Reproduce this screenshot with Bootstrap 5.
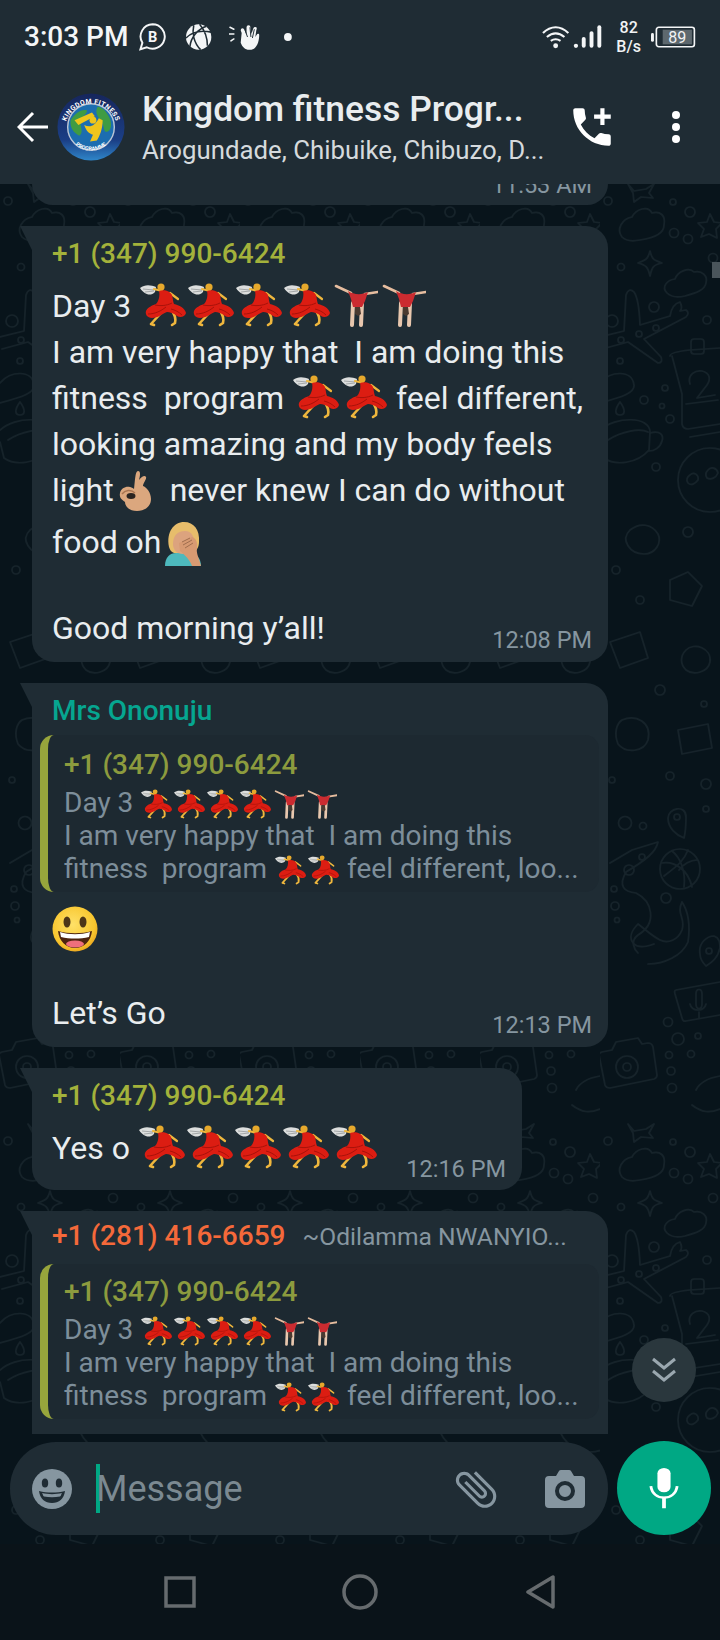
<!DOCTYPE html>
<html lang="en">
<head>
    <meta charset="UTF-8">
    <meta name="viewport" content="width=device-width, initial-scale=1.0">
    <title>Kingdom fitness Programme</title>
    <link href="https://cdn.jsdelivr.net/npm/bootstrap@5.3.0/dist/css/bootstrap.min.css" rel="stylesheet">
    <style>
        body { margin: 0; background: #08141b; font-family: Roboto, "Liberation Sans", sans-serif; color: #e9edef; }
        .app { width: 720px; height: 1640px; overflow: hidden; }
        .wallpaper { position: absolute; left: 0; top: 0; z-index: 0; }
        .wa-head { height: 184px; background: #1f2c34; z-index: 2; }
        .statusbar { height: 74px; padding: 0 24px; }
        .clock { font-size: 28px; font-weight: 500; color: #f4f6f7; width: 117px; white-space: nowrap; }
        .speed { width: 38px; font-size: 16px; line-height: 19px; font-weight: 500; text-align: center; color: #f1f3f4; }
        .toolbar { height: 110px; margin-top: -2px; padding-left: 17px; }
        .avatar { margin-left: 8px; }
        .chat-title { font-size: 35.4px; font-weight: 500; line-height: 42px; color: #e9edef; white-space: nowrap; margin-top: 1px; }
        .chat-sub { font-size: 25.8px; line-height: 34px; color: #d5dadd; white-space: nowrap; margin-top: 3px; }
        .head-text { margin-left: 17px; width: 416px; }
        .chat-area { height: 1250px; overflow: hidden; z-index: 1; }
        .bub { background: #1f2c34; width: 576px; margin: 21px 0 0 32px; padding: 10px 16px 11px 20px; border-radius: 22px; position: relative; }
        .bub.has-tail { border-top-left-radius: 0; }
        .bub.has-tail::before { content: ""; position: absolute; left: -12px; top: 0; width: 12px; height: 24px; background: #1f2c34; clip-path: polygon(0 0, 100% 0, 100% 100%); }
        .bub-stub { display: flow-root; height: 21px; margin-top: 0; border-radius: 0 0 22px 22px; padding: 0 16px; text-align: right; }
        .bub-stub .msg-time { display: block; margin-top: -14px; }
        .bub-short { width: 490px; padding-bottom: 19px; }
        .bub-cut { padding-top: 7px; padding-bottom: 40px; }
        .who { font-size: 28px; font-weight: 500; line-height: 36px; white-space: nowrap; }
        .who-olive { color: #a3b23b; }
        .who-teal { color: #06a690; }
        .who-orange { color: #f4693a; }
        .who-alias { font-size: 24.6px; font-weight: 400; color: #8696a0; margin-left: 17px; }
        .ln { height: 46px; line-height: 46px; font-size: 32px; white-space: pre; color: #e9edef; }
        .first-ln { margin-top: 11px; }
        .food-ln { margin-top: 6px; }
        .morning-ln { margin-top: 40px; }
        .lets-ln { margin-top: 38px; }
        .msg-time { font-size: 23.5px; line-height: 30px; color: #8696a0; white-space: nowrap; }
        .end-ln .msg-time { margin-bottom: -4px; }
        .bub-short .end-ln .msg-time { margin-bottom: -13px; }
        .quote { background: #1d2931; margin: 6px -7px 0 -12px; border-left: 8px solid #97a53c; border-radius: 14px; padding: 12px 10px 7px 16px; }
        .bub-cut .quote { margin-top: 9px; padding-top: 10px; }
        .q-who { color: #8c9b3e; }
        .q-ln { height: 33px; line-height: 33px; font-size: 28px; color: #7d8e9a; white-space: pre; }
        .q-first { margin-top: 3px; }
        .emo { width: 46px; height: 44px; margin: 0 1px; vertical-align: -10px; }
        .emo-q { width: 31px; height: 30px; margin: 0 1px; vertical-align: -7px; }
        .emo-ok { width: 34px; height: 42px; margin: 0 17px 0 5px; vertical-align: -11px; }
        .emo-palm { width: 38px; height: 44px; margin-left: 3px; vertical-align: -13px; }
        .emo-smile { display: block; width: 46px; height: 46px; margin-top: 14px; }
        .to-bottom { position: absolute; left: 632px; top: 1338px; width: 64px; height: 64px; background: #2a373d; border-radius: 50%; z-index: 3; }
        .side-tick { position: absolute; left: 712px; top: 262px; width: 8px; height: 16px; background: #4a555b; z-index: 3; }
        .composer { height: 110px; padding: 8px 9px 0 10px; z-index: 2; gap: 9px; }
        .pill { width: 598px; height: 93px; background: #1f2c34; border-radius: 46px; padding-left: 22px; }
        .caret-bar { width: 4px; height: 49px; background: #00a884; margin-left: 24px; }
        .msg-hint { font-size: 36px; color: #7b8991; margin-left: -4px; width: 364px; }
        .mic-btn { width: 94px; height: 94px; background: #00a884; border-radius: 50%; margin-top: -1px; }
        .navkeys { height: 96px; background: #0a1319; z-index: 2; }
    </style>
</head>
<body>
<div class="app d-flex flex-column position-relative">

    <!-- doodle wallpaper, tile follows the right hand strip of the screen -->
    <svg class="wallpaper" width="720" height="1640" aria-hidden="true">
        <defs>
            <pattern id="doodles" patternUnits="userSpaceOnUse" x="0" y="180" width="120" height="940">
                <g fill="none" stroke="#16232a" stroke-width="1.7" stroke-linejoin="round" stroke-linecap="round">
                    <path d="M28 4l6 7 12-2 8-5-5 9 4 5-12-1-7 5-1-9z"/>
                    <circle cx="8" cy="21" r="4"/><circle cx="73" cy="22" r="3"/><circle cx="90" cy="32" r="5"/><circle cx="74" cy="53" r="4.500"/><circle cx="88" cy="59" r="4.500"/><circle cx="21" cy="87" r="3.500"/><circle cx="113" cy="78" r="4.500"/>
                    <path d="M22 57c-6-8 0-18 10-20 4-8 16-12 20-4 8-2 14 2 12 12 0 8-10 13-24 15-10 2-15 0-18-3z"/>
                    <path d="M50 71c2 8 3 9 12 12-9 2-10 4-12 13-2-9-4-11-12-13 8-3 10-4 12-12z"/>
                    <path d="M110 34l4 8 8 1-6 6 1 9-8-4-8 3 3-8-6-6 9-1z"/>
                    <path d="M67 113c-6-6 0-13 8-14 3-8 14-12 19-7 8-2 14 4 12 11-1 7-10 10-21 13-9 2-15 0-18-3z"/>
                    <path d="M0 157l24-6 2-36q3-8 8-3 5 7 6 33l30-9q2-12 10-14 3 6 0 9l6-1q4 3 0 7l-42 22 17 18q2 6-3 6l-30-21-26 7"/>
                    <circle cx="54" cy="127" r="5"/><circle cx="12" cy="141" r="6"/><circle cx="39" cy="154" r="3"/><circle cx="56" cy="148" r="3"/><circle cx="21" cy="160" r="3"/><circle cx="107" cy="140" r="4"/>
                    <path d="M70 176q0-4 20-6l30-2M72 176l10 38v30q1 5 6 5l32-5"/>
                    <rect x="91" y="159" width="13" height="15" rx="3"/>
                    <path d="M90 204c-3-10 6-14 12-13 8 2 9 8 5 14l-10 13 18-3M86 224l32-4"/>
                    <path d="M90 257l30-5"/>
                    <circle cx="65" cy="208" r="3"/><circle cx="44" cy="220" r="4"/><circle cx="62" cy="226" r="2.500"/><circle cx="70" cy="239" r="4"/><circle cx="20" cy="181" r="3"/>
                    <path d="M0 203c10-12 32-14 34 2 1 8-12 12-34 18"/>
                    <path d="M20 222c-6 8-5 13 0 13s6-5 0-13z"/>
                    <path d="M0 250c16-14 50-14 50 2l-1 18c-12 14-34 16-45 8L0 262"/>
                    <path d="M8 260c14-9 32-12 40-8M50 253c10-3 14 2 12 8-2 7-8 10-13 10"/>
                    <circle cx="56" cy="287" r="4"/>
                    <circle cx="110" cy="300" r="32"/>
                    <path d="M90 295c4-4 9 0 8 5-3 4-7 6-10 3-2-3-1-6 2-8zM108 290c3-4 9-2 10 3-2 5-7 7-11 5-2-3-1-6 1-8z"/>
                    <!-- middle of the strip -->
                    <path d="M30 350c10-8 22-6 28 4 4 8-2 20-14 20-14 0-24-14-14-24z"/><circle cx="88" cy="352" r="5"/><circle cx="16" cy="390" r="4"/>
                    <path d="M70 400l18-8 14 14-10 20-22-6z"/><circle cx="40" cy="420" r="4"/>
                    <path d="M10 462l30-10 8 26-28 10z"/><path d="M86 470c8-8 26-2 24 12-2 10-16 14-24 8-6-6-6-14 0-20z"/>
                    <circle cx="60" cy="510" r="5"/><circle cx="104" cy="524" r="3"/>
                    <path d="M22 540c14-6 30 2 26 20-4 12-22 14-30 4-4-10-2-20 4-24z"/><path d="M78 550l30-6 4 24-30 6z"/>
                    <circle cx="70" cy="596" r="4"/><circle cx="12" cy="600" r="3"/><circle cx="106" cy="604" r="5"/>
                    <!-- lower part, ball, tentacle, pins, camera -->
                    <circle cx="25" cy="643" r="6.500"/><circle cx="43" cy="646" r="3.500"/><circle cx="106" cy="629" r="3"/>
                    <path d="M68 638c0-10 18-14 18-1 0 8-1 17-2 21-8-3-16-10-16-20z"/><circle cx="77" cy="637" r="3"/>
                    <circle cx="80" cy="689" r="20"/><path d="M62 683c12-2 26 6 30 24M72 671c8 6 14 20 12 36M88 670c-4 10-8 14-24 26M97 680c-6 0-14 4-18 10"/>
                    <path d="M10 683l22-13 26-8c-2 10-12 18-32 30-8 14-2 20 10 21 16 8 22 30 2 42-8 6-4 14 0 18"/>
                    <circle cx="29" cy="690" r="5"/><circle cx="42" cy="677" r="3"/><circle cx="14" cy="709" r="3"/><circle cx="15" cy="726" r="4"/><circle cx="66" cy="718" r="5"/><circle cx="17" cy="740" r="2.500"/>
                    <path d="M82 722c-6 12 4 16 0 28-4 10-14 14-22 10-8-4-14-10-22-16-6 6-10 14-4 20 6 6 20 0 20 0M82 722c8 12 8 26 6 40-6 14-24 22-40 22"/>
                    <path d="M100 774c-2-12 8-18 14-18 6 2 6 8 6 12-2 10-8 14-14 18-4-4-6-8-6-12z"/><circle cx="109" cy="771" r="3"/>
                    <path d="M76 810l44-8M76 810q-2 0-1 4l7 24q1 4 4 3l34-6"/><path d="M96 814c0-6 6-6 6 0v10c0 6-6 6-6 0zM90 824c2 8 14 8 16 0M99 832v6"/>
                    <circle cx="68" cy="842" r="4.500"/><circle cx="78" cy="859" r="6"/><circle cx="98" cy="856" r="3"/><circle cx="69" cy="875" r="3.500"/><circle cx="91" cy="874" r="3.500"/><circle cx="71" cy="891" r="4"/><circle cx="72" cy="908" r="4.500"/>
                    <path d="M2 872l10-2 4-8 22-4 4 6 6-1q4 0 5 4l4 28q0 3-3 4l-44 9q-4 0-5-3l-6-30q0-2 3-3z"/><circle cx="27" cy="887" r="11"/><circle cx="27" cy="887" r="4"/>
                    <path d="M96 910c4-8 12-12 24-14M92 925c10 8 18 8 28 4"/>
                </g>
            </pattern>
        </defs>
        <rect width="720" height="1640" fill="url(#doodles)"/>
    </svg>

    <!-- emoji drawings -->
    <svg width="0" height="0" class="position-absolute" aria-hidden="true">
        <symbol id="dancer" viewBox="0 0 46 44">
            <path d="M0 5C5 1 11 2 16 4l-1 5C10 14 4 11 0 5z" fill="#dcdedd"/>
            <path d="M3 6l11 1M5 9l9-1" stroke="#8b8f90" stroke-width=".7" fill="none"/>
            <path d="M14 6l8 2M30 10l8 6" stroke="#efb73d" stroke-width="2.200" fill="none" stroke-linecap="round"/>
            <circle cx="21" cy="4" r="3.600" fill="#e6a92c"/>
            <path d="M21 30L11 41M11 41l3 1" stroke="#efb73d" stroke-width="2.600" fill="none" stroke-linecap="round"/>
            <path d="M32 28c3 4 4 8 3 12l-3 2" stroke="#efb73d" stroke-width="2.600" fill="none" stroke-linecap="round"/>
            <path d="M19 8C24 6 30 8 32 12c1 4 1 7 2 9 5 1 11 4 12 9-1 4-6 5-9 3-4-3-7-4-10-4-5 2-9 6-15 6-5 0-7-4-6-7 2-4 7-6 10-7 3-3 4-9 3-13z" fill="#dc1d12"/>
            <path d="M8 31c7 0 13-3 18-7M15 22c5 1 11 1 17-2M31 26c4 1 8 3 11 6" stroke="#a8120a" stroke-width="1" fill="none"/>
        </symbol>
        <symbol id="gymnast" viewBox="0 0 46 44">
            <path d="M4 3l15 7M46 9l-13 2" stroke="#e6bd9f" stroke-width="2.600" stroke-linecap="round"/>
            <path d="M21 20l-1 22M30 20l-1 22" stroke="#e8c7ae" stroke-width="4" stroke-linecap="round"/>
            <path d="M16 8c6 4 14 4 20 1l-3 9-3 6h-9l-2-8z" fill="#cb2b30"/>
            <path d="M23 24h5l1 7-3 2-3-2z" fill="#4a3a30"/>
        </symbol>
        <symbol id="okhand" viewBox="0 0 34 42">
            <path d="M19 1c3 0 2 5 1 9 3-4 6-5 7-3 1 2-3 6-3 9 3 1 8 6 8 13 0 8-7 12-14 12-8 0-12-5-12-9C3 30 0 28 1 23c1-5 6-7 10-6 1 0 3 1 4 2 1-7 1-18 4-18z" fill="#dba77e"/>
            <ellipse cx="12" cy="26" rx="4.500" ry="3" fill="#2b2420"/>
            <path d="M3 24c3-4 9-5 13-1" stroke="#a97551" stroke-width="1.500" fill="none"/>
        </symbol>
        <symbol id="facepalm" viewBox="0 0 38 44">
            <path d="M1 44c0-9 5-13 11-13h12c8 0 13 5 13 13z" fill="#4db9bd"/>
            <path d="M5 25C2 10 10 0 20 0s16 8 15 20c0 6-3 9-6 11H10c-3-1-4-3-5-6z" fill="#e7bd6b"/>
            <path d="M9 22c0-9 5-13 12-13s9 6 9 12c0 6-4 11-11 11-6 0-10-4-10-10z" fill="#dca37e"/>
            <path d="M15 21l13-6c4 1 6 6 5 11-1 6 2 9 4 18h-9c-2-6-7-11-12-15z" fill="#d79a72"/>
            <path d="M18 20l8-4M19 23l9-5M21 26l8-5" stroke="#a06e4f" stroke-width="1" fill="none"/>
        </symbol>
        <symbol id="smiley" viewBox="0 0 46 46">
            <defs><radialGradient id="smileFill" cx=".45" cy=".4" r=".65"><stop offset="0" stop-color="#ffe168"/><stop offset=".75" stop-color="#f8c62e"/><stop offset="1" stop-color="#e79f1c"/></radialGradient></defs>
            <circle cx="23" cy="23" r="22.500" fill="url(#smileFill)"/>
            <ellipse cx="15" cy="16" rx="3.500" ry="5.500" fill="#4d3618"/><ellipse cx="31" cy="16" rx="3.500" ry="5.500" fill="#4d3618"/>
            <path d="M6 25c10 3 24 3 34 0-1 10-8 17-17 17S7 35 6 25z" fill="#4d2410"/>
            <path d="M8 26c9 3 21 3 30 0l-1 5c-9 2-19 2-28 0z" fill="#fff"/>
            <ellipse cx="23" cy="38" rx="9" ry="3.500" fill="#ee6f7c"/>
        </symbol>
    </svg>

    <div class="wa-head position-relative">
        <div class="statusbar d-flex align-items-center">
            <span class="clock">3:03 PM</span>
            <svg width="30" height="30" viewBox="0 0 30 30" aria-hidden="true">
                <path d="M15 2a12.500 12.500 0 1 1-6 23.500L2.500 27.500 4.500 21A12.500 12.500 0 0 1 15 2z" fill="none" stroke="#f4f6f7" stroke-width="2"/>
                <text x="15" y="20" font-size="15" font-weight="700" fill="#f4f6f7" text-anchor="middle" font-family="Roboto">B</text>
            </svg>
            <svg style="margin-left:18px" width="28" height="28" viewBox="0 0 28 28" aria-hidden="true">
                <circle cx="14" cy="14" r="13" fill="#f4f6f7"/>
                <path d="M1 15C7 9 17 7 27 9M9 2C7 10 9 20 16 27M5 24C6 14 13 6 22 3M15 1c5 6 8 14 8 22" fill="none" stroke="#1f2c34" stroke-width="1.600"/>
            </svg>
            <svg class="ms-3" width="32" height="28" viewBox="0 0 32 28" aria-hidden="true">
                <path d="M13 10l-1-3q0-2 2-2 1 0 2 2l2 5 0-8q0-2 2-2t2 2l1 7 2-6q1-2 3-1 1 1 0 3l-1 7 2-3q2-1 2 1c0 6-2 14-8 15-6 1-9-2-11-7z" fill="#f4f6f7"/>
                <path d="M16.500 7l2.500 7M21.500 4l1 10M26 6l-2 9" stroke="#1f2c34" stroke-width="1" fill="none"/>
                <path d="M1 4l4 2M0 11h5M2 18l3-2" stroke="#f4f6f7" stroke-width="1.600" stroke-linecap="round"/>
            </svg>
            <svg class="ms-4" width="8" height="8" viewBox="0 0 8 8" aria-hidden="true"><circle cx="4" cy="4" r="4" fill="#f4f6f7"/></svg>
            <svg style="margin-left:250px" width="28" height="24" viewBox="0 0 28 24" aria-hidden="true">
                <path d="M1 8c8-8 18-8 26 0M5 12c6-5 12-5 18 0M9 16c3-2 7-2 10 0" fill="none" stroke="#f4f6f7" stroke-width="2.200"/>
                <circle cx="14" cy="21" r="2.500" fill="#f4f6f7"/>
            </svg>
            <svg class="ms-1" width="30" height="24" viewBox="0 0 30 24" aria-hidden="true">
                <g fill="#f4f6f7"><circle cx="3" cy="21" r="2.200"/><rect x="9" y="12" width="4" height="11" rx="2"/><rect x="17" y="6" width="4" height="17" rx="2"/><rect x="25" y="0" width="4" height="23" rx="2"/></g>
            </svg>
            <div class="speed ms-2"><div>82</div><div>B/s</div></div>
            <svg class="ms-1" width="46" height="22" viewBox="0 0 46 22" aria-hidden="true">
                <rect x="0" y="7" width="3" height="9" rx="1.500" fill="#f4f6f7"/>
                <rect x="5.500" y="1" width="39" height="20" rx="2.500" fill="none" stroke="#f4f6f7" stroke-width="1.700"/>
                <rect x="12" y="3.500" width="30" height="15" fill="#5d686e"/>
                <text x="27" y="17" font-size="16.500" fill="#f1f3f4" text-anchor="middle" font-family="Roboto">89</text>
            </svg>
        </div>
        <div class="toolbar d-flex align-items-center">
            <svg width="32" height="32" viewBox="0 0 32 32" aria-hidden="true">
                <path d="M31 16H3M16 2L2 16l14 14" fill="none" stroke="#fff" stroke-width="3"/>
            </svg>
            <svg class="avatar" width="68" height="68" viewBox="0 0 70 70" aria-hidden="true">
                <defs>
                    <linearGradient id="ringFill" x1="0" y1="0" x2="0" y2="1"><stop offset="0" stop-color="#16265c"/><stop offset=".7" stop-color="#1b3f86"/><stop offset="1" stop-color="#2f86c9"/></linearGradient>
                    <path id="arcTop" d="M8 38a27 27 0 1 1 54 0"/>
                    <path id="arcLow" d="M13 46a25 25 0 0 0 44 0"/>
                </defs>
                <circle cx="35" cy="35" r="34.500" fill="url(#ringFill)"/>
                <circle cx="35" cy="35" r="24" fill="#1c6db0" stroke="#b9c5d6" stroke-width="1.500"/>
                <path d="M14 28c5-8 12-12 17-10 0 4-8 8-7 13 1 6 3 10-1 13-6-3-10-9-9-16zM42 14c6 2 10 6 13 14 2 8-1 12-5 12-3-3-1-9-6-13-3-4-5-8-2-13z" fill="#3f9b43"/>
                <path d="M18 28l18-8 3 4-17 9z" fill="#efc51c"/>
                <path d="M28 33c6 3 11 1 15-7l4 2c0 9-3 16-6 21l-7 1 3-7c-4-1-7-4-9-10z" fill="#efc51c"/>
                <circle cx="37" cy="28" r="3.500" fill="#efc51c"/>
                <g font-family="Roboto" font-weight="700" fill="#fff">
                    <text font-size="7" letter-spacing=".4"><textPath href="#arcTop" startOffset="50%" text-anchor="middle">KINGDOM FITNESS</textPath></text>
                    <text font-size="5.500"><textPath href="#arcLow" startOffset="50%" text-anchor="middle">PROGRAMME</textPath></text>
                </g>
            </svg>
            <div class="head-text">
                <div class="chat-title">Kingdom fitness Progr...</div>
                <div class="chat-sub">Arogundade, Chibuike, Chibuzo, D...</div>
            </div>
            <svg style="margin-left:9px" width="50" height="50" viewBox="0 0 24 24" aria-hidden="true">
                <path fill="#fff" d="M20 15.500c-1.250 0-2.450-.2-3.570-.57-.35-.11-.74-.03-1.020.24l-2.200 2.200c-2.830-1.440-5.150-3.750-6.590-6.590l2.200-2.210c.28-.26.36-.65.25-1C8.700 6.450 8.500 5.250 8.500 4c0-.55-.45-1-1-1H4c-.55 0-1 .45-1 1 0 9.390 7.610 17 17 17 .55 0 1-.45 1-1v-3.500c0-.55-.45-1-1-1zM21 6h-3V3h-2v3h-3v2h3v3h2V8h3z"/>
            </svg>
            <svg style="margin-left:54px" width="10" height="34" viewBox="0 0 10 34" aria-hidden="true">
                <g fill="#fff"><circle cx="5" cy="5" r="4"/><circle cx="5" cy="17" r="4"/><circle cx="5" cy="29" r="4"/></g>
            </svg>
        </div>
    </div>

    <div class="chat-area position-relative">
        <div class="bub bub-stub"><span class="msg-time">11:53 AM</span></div>

        <div class="bub has-tail">
            <div class="who who-olive">+1 (347) 990-6424</div>
            <div class="ln first-ln">Day 3 <svg class="emo"><use href="#dancer"/></svg><svg class="emo"><use href="#dancer"/></svg><svg class="emo"><use href="#dancer"/></svg><svg class="emo"><use href="#dancer"/></svg><svg class="emo"><use href="#gymnast"/></svg><svg class="emo"><use href="#gymnast"/></svg></div>
            <div class="ln">I am very happy that  I am doing this</div>
            <div class="ln">fitness  program <svg class="emo"><use href="#dancer"/></svg><svg class="emo"><use href="#dancer"/></svg> feel different,</div>
            <div class="ln">looking amazing and my body feels</div>
            <div class="ln">light<svg class="emo-ok"><use href="#okhand"/></svg>never knew I can do without</div>
            <div class="ln food-ln">food oh<svg class="emo-palm"><use href="#facepalm"/></svg></div>
            <div class="ln morning-ln end-ln d-flex justify-content-between align-items-end"><span>Good morning y’all!</span><span class="msg-time">12:08 PM</span></div>
        </div>

        <div class="bub has-tail">
            <div class="who who-teal">Mrs Ononuju</div>
            <div class="quote">
                <div class="who q-who">+1 (347) 990-6424</div>
                <div class="q-ln q-first">Day 3 <svg class="emo-q"><use href="#dancer"/></svg><svg class="emo-q"><use href="#dancer"/></svg><svg class="emo-q"><use href="#dancer"/></svg><svg class="emo-q"><use href="#dancer"/></svg><svg class="emo-q"><use href="#gymnast"/></svg><svg class="emo-q"><use href="#gymnast"/></svg></div>
                <div class="q-ln">I am very happy that  I am doing this</div>
                <div class="q-ln">fitness  program <svg class="emo-q"><use href="#dancer"/></svg><svg class="emo-q"><use href="#dancer"/></svg> feel different, loo...</div>
            </div>
            <svg class="emo-smile"><use href="#smiley"/></svg>
            <div class="ln lets-ln end-ln d-flex justify-content-between align-items-end"><span>Let’s Go</span><span class="msg-time">12:13 PM</span></div>
        </div>

        <div class="bub has-tail bub-short">
            <div class="who who-olive">+1 (347) 990-6424</div>
            <div class="ln first-ln end-ln d-flex justify-content-between align-items-end"><span>Yes o <svg class="emo"><use href="#dancer"/></svg><svg class="emo"><use href="#dancer"/></svg><svg class="emo"><use href="#dancer"/></svg><svg class="emo"><use href="#dancer"/></svg><svg class="emo"><use href="#dancer"/></svg></span><span class="msg-time">12:16 PM</span></div>
        </div>

        <div class="bub has-tail bub-cut">
            <div class="who who-orange">+1 (281) 416-6659<span class="who-alias">~Odilamma NWANYIO...</span></div>
            <div class="quote">
                <div class="who q-who">+1 (347) 990-6424</div>
                <div class="q-ln q-first">Day 3 <svg class="emo-q"><use href="#dancer"/></svg><svg class="emo-q"><use href="#dancer"/></svg><svg class="emo-q"><use href="#dancer"/></svg><svg class="emo-q"><use href="#dancer"/></svg><svg class="emo-q"><use href="#gymnast"/></svg><svg class="emo-q"><use href="#gymnast"/></svg></div>
                <div class="q-ln">I am very happy that  I am doing this</div>
                <div class="q-ln">fitness  program <svg class="emo-q"><use href="#dancer"/></svg><svg class="emo-q"><use href="#dancer"/></svg> feel different, loo...</div>
            </div>
        </div>
    </div>

    <div class="side-tick"></div>
    <div class="to-bottom d-flex align-items-center justify-content-center">
        <svg width="26" height="28" viewBox="0 0 26 28" aria-hidden="true">
            <path d="M2 3l11 9 11-9M2 15l11 9 11-9" fill="none" stroke="#9aa7af" stroke-width="3"/>
        </svg>
    </div>

    <div class="composer d-flex position-relative">
        <div class="pill d-flex align-items-center">
            <svg width="40" height="40" viewBox="0 0 40 40" aria-hidden="true">
                <circle cx="20" cy="20" r="20" fill="#8696a0"/>
                <ellipse cx="13" cy="14" rx="3.200" ry="4.500" fill="#1f2c34"/><ellipse cx="27" cy="14" rx="3.200" ry="4.500" fill="#1f2c34"/>
                <path d="M7 22c8 2 18 2 26 0-1 8-6 12-13 12S8 30 7 22z" fill="#1f2c34"/>
                <path d="M10 24c6 1.500 14 1.500 20 0-1 1.500-1 3-2 3.500-5 1-11 1-16 0-1-.5-1-2-2-3.500z" fill="#8696a0"/>
            </svg>
            <div class="caret-bar"></div>
            <div class="msg-hint">Message</div>
            <svg width="50" height="50" viewBox="0 0 24 24" style="margin-left:-9px" aria-hidden="true">
                <path fill="#8696a0" transform="rotate(-45 12 12)" d="M16.500 6v11.500c0 2.210-1.790 4-4 4s-4-1.790-4-4V5c0-1.380 1.120-2.500 2.500-2.500s2.500 1.120 2.500 2.500v10.500c0 .55-.45 1-1 1s-1-.45-1-1V6H10v9.500c0 1.380 1.120 2.500 2.500 2.500s2.500-1.120 2.500-2.500V5c0-2.210-1.790-4-4-4S7 2.790 7 5v12.500c0 3.040 2.460 5.500 5.500 5.500s5.500-2.460 5.500-5.500V6h-1.500z"/>
            </svg>
            <svg style="margin-left:44px" width="40" height="38" viewBox="0 0 40 38" aria-hidden="true">
                <path fill="#8696a0" fill-rule="evenodd" d="M4 6h7l3-5q.5-1 2-1h8q1.500 0 2 1l3 5h7q4 0 4 4v24q0 4-4 4H4q-4 0-4-4V10q0-4 4-4zm16 5a10 10 0 1 0 0 20 10 10 0 0 0 0-20zm0 4a6 6 0 1 1 0 12 6 6 0 0 1 0-12z"/>
            </svg>
        </div>
        <div class="mic-btn d-flex align-items-center justify-content-center">
            <svg width="30" height="41" viewBox="0 0 32 54" preserveAspectRatio="none" aria-hidden="true">
                <rect x="9" y="0" width="14" height="32" rx="7" fill="#fff"/>
                <path d="M2 24c1 10 7 15 14 15s13-5 14-15" fill="none" stroke="#fff" stroke-width="3"/>
                <rect x="14" y="38" width="4" height="15" fill="#fff"/>
            </svg>
        </div>
    </div>

    <div class="navkeys d-flex align-items-center position-relative">
        <svg style="margin-left:164px" width="32" height="32" viewBox="0 0 32 32" aria-hidden="true"><rect x="2" y="2" width="28" height="28" fill="none" stroke="#666b6e" stroke-width="3.500"/></svg>
        <svg style="margin-left:146px" width="36" height="36" viewBox="0 0 36 36" aria-hidden="true"><circle cx="18" cy="18" r="16" fill="none" stroke="#666b6e" stroke-width="3.500"/></svg>
        <svg style="margin-left:147px" width="30" height="34" viewBox="0 0 30 34" aria-hidden="true"><path d="M28 2v30L3 17z" fill="none" stroke="#666b6e" stroke-width="3.500" stroke-linejoin="round"/></svg>
    </div>
</div>
<script src="https://cdn.jsdelivr.net/npm/bootstrap@5.3.0/dist/js/bootstrap.bundle.min.js"></script>
</body>
</html>
